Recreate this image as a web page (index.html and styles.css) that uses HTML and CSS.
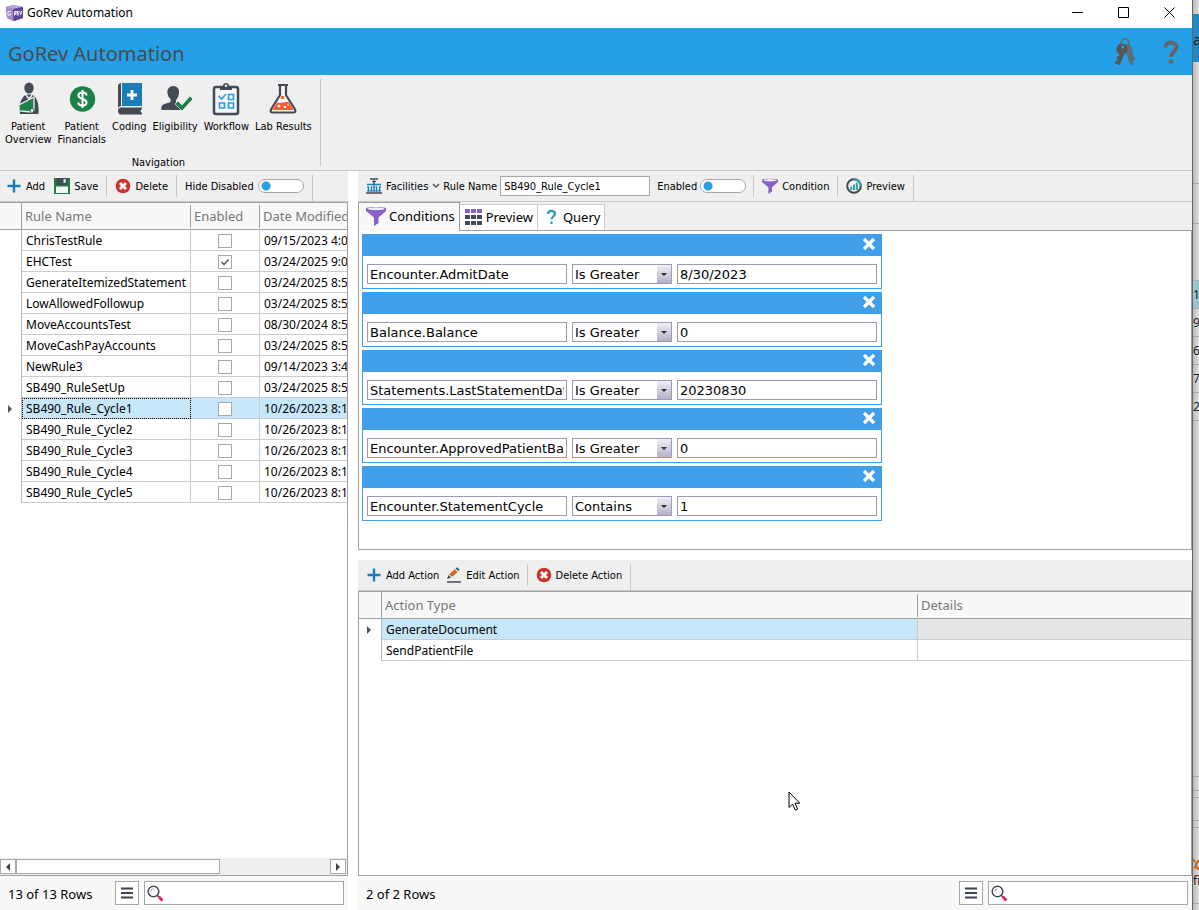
FILE: index.html
```html
<!DOCTYPE html>
<html lang="en">
<head>
    <meta charset="UTF-8">
    <meta name="viewport" content="width=device-width, initial-scale=1.0">
    <title>GoRev Automation</title>
    <link rel="stylesheet" href="styles.css">
</head>
<body>

    <!-- Shared icons -->
    <svg class="sprite" aria-hidden="true">
        <symbol id="plus" viewBox="0 0 16 16"><path d="M8 1.5v13M1.5 8h13" stroke="#1a7db8" stroke-width="2.4" fill="none"/></symbol>
        <symbol id="delete" viewBox="0 0 16 16"><circle cx="8" cy="8" r="7.3" fill="#d0302b"/><path d="M5 5l6 6M11 5l-6 6" stroke="#fff" stroke-width="2.8"/></symbol>
        <symbol id="funnel" viewBox="0 0 20 20"><path d="M0 2.500C0 .5 20 .5 20 2.500V5l-7.500 6.500V17L8 20v-8.500L0 5z" fill="#8a5fc8"/><ellipse cx="10" cy="2.800" rx="8.500" ry="1.500" fill="#f2ecfa"/></symbol>
        <symbol id="menu" viewBox="0 0 12 12"><path d="M0 1.500h12M0 6h12M0 10.500h12" stroke="#3c434f" stroke-width="2"/></symbol>
        <symbol id="search" viewBox="0 0 17 17"><circle cx="6.500" cy="6.500" r="5.300" fill="#fff" stroke="#444b57" stroke-width="1.500"/><path d="M3.800 6.500a2.800 2.800 0 0 1 2.700-2.700" fill="none" stroke="#8d939c"/><path d="M10.500 10.500l1.500 1.500" stroke="#444b57" stroke-width="1.500"/><path d="M11.800 11.800l3.700 3.700" stroke="#d82b63" stroke-width="3"/></symbol>
        <symbol id="close" viewBox="0 0 14 14"><path d="M2 2l10 10M12 2L2 12" stroke="#fff" stroke-width="3.400"/></symbol>
    </svg>

    <div class="app">
        <header class="titlebar">
            <svg class="logo" viewBox="0 0 17 16"><path d="M0 2L7 0l10 2v11l-9 3-7-3z" fill="#7b5fae"/><path d="M0 2l7 2v12l-6-3z" fill="#a58cc9"/><path d="M0 2L7 0l10 2-10 2z" fill="#b9a6d9"/><path d="M7 4l10-2v11l-9 3z" fill="#5d458f"/><path d="M8.500 10.500V6.500h2V8h-2l2 2.300M13 6.500h-1.500v3.500H13M11.500 8.300H13M13.800 6.300l.9 3.500 1-3.800M4.500 6.500H2v3.500h2.500V8.500" fill="none" stroke="#f4f0fb"/></svg>
            <span>GoRev Automation</span>
            <div class="window-buttons">
                <button aria-label="Minimize"><svg viewBox="0 0 11 11"><path d="M0 5.500h11" stroke="#000"/></svg></button>
                <button aria-label="Maximize"><svg viewBox="0 0 11 11"><path d="M.5.5h10v10H.5z" fill="none" stroke="#000"/></svg></button>
                <button aria-label="Close"><svg viewBox="0 0 11 11"><path d="M.5.5l10 10M10.500.5l-10 10" stroke="#000"/></svg></button>
            </div>
        </header>

        <div class="banner">
            <h1>GoRev Automation</h1>
            <button aria-label="Keys"><svg width="22" height="28" viewBox="0 0 22 28"><circle cx="11" cy="5" r="4" fill="none" stroke="#6a6a6a" stroke-width="1.500"/><path d="M12 6c5 0 7.500 4 6 8l3.500 8-2.500 1 1 3-3.500 1-4.500-12-1-6z" fill="#5d6d7b"/><path d="M8.500 5.500a5.800 5.800 0 0 1 1.500 11L6 27l-5-1.500 1-3 1.500.3.500-1.800-1.500-.7.800-2.300 1.600.2.300-2A5.800 5.800 0 0 1 8.500 5.500z" fill="#555"/><circle cx="8.800" cy="9" r="1.600" fill="#24a0e8"/></svg></button>
            <button aria-label="Help"><svg width="16" height="24" viewBox="0 0 16 24"><path d="M2.500 7.500c0-3.500 2.500-5 5.500-5s5.500 2 5.500 5c0 4-5.500 4.500-5.500 9.500" fill="none" stroke="#666" stroke-width="4"/><path d="M5.800 19.500h4.400v4H5.800z" fill="#666"/></svg></button>
        </div>

        <nav class="ribbon">
            <div class="ribbon-group">
                <div class="ribbon-items">
                    <button>
                        <svg viewBox="0 0 34 34"><ellipse cx="18" cy="6" rx="4.700" ry="5.500" fill="#434a54"/><path d="M9 32c-1-7 0-14 4-18 3-2 8-2 10 0 4 3 5 10 4.500 18z" fill="#434a54"/><path d="M15 13l3 4 3-4" fill="none" stroke="#efefef" stroke-width="1.500"/><path d="M23 15L8 23v6l13 1 2-2v-4z" fill="#1c8048" stroke="#efefef" stroke-width="1.300"/><circle cx="21" cy="28.500" r="2" fill="#efefef" stroke="#1c8048"/></svg>
                        Patient<br>Overview
                    </button>
                    <button>
                        <svg viewBox="0 0 34 34"><circle cx="17.500" cy="17" r="12.700" fill="#1c8048"/><path d="M21.500 13.500c0-2-1.500-3-4-3s-4 1.200-4 3c0 4.500 8 2.500 8 7 0 2-1.500 3-4 3s-4.200-1.200-4.200-3M17.500 8v18" fill="none" stroke="#fff" stroke-width="2"/></svg>
                        Patient<br>Financials
                    </button>
                    <button>
                        <svg viewBox="0 0 34 34"><path d="M6 4q0-2.500 3-3v23q-2 0-3 2z" fill="#434a54"/><path d="M10 1h20v23H10z" fill="#1a7db8"/><path d="M20 8v10M15 13h10" stroke="#fff" stroke-width="2.800"/><path d="M9 25.500h21v1.500c-2 1-2 3 0 4v1.500H9c-4 0-4-7 0-7z" fill="#434a54"/></svg>
                        Coding
                    </button>
                    <button>
                        <svg viewBox="0 0 34 34"><path d="M9.500 11c-.5-4 2-7 5.800-7s6.300 3 5.700 7c-.2 3-1.500 5.500-3 7v3l5 2v5H3.500c-.5-3 0-5 3-6l6-2v-3c-1.700-1.500-2.800-3.500-3-6z" fill="#434a54"/><path d="M17 22l3-3 4 4 8-9 3 3-11 12z" fill="#1c8048" stroke="#efefef" stroke-width=".7"/></svg>
                        Eligibility
                    </button>
                    <button>
                        <svg viewBox="0 0 34 34"><rect x="5" y="5" width="24" height="27" rx="2" fill="#f7f7f7" stroke="#434a54" stroke-width="2.500"/><path d="M11 8V4h3a3 3 0 0 1 6 0h3v4z" fill="#434a54"/><circle cx="17" cy="3.800" r="1.200" fill="#f7f7f7"/><path d="M9.500 14l3 3 4.500-5M19.500 12.500h5v5h-5zM10.500 21h5v5h-5zM19.500 21h5v5h-5z" fill="none" stroke="#24a0e8" stroke-width="1.700"/></svg>
                        Workflow
                    </button>
                    <button>
                        <svg viewBox="0 0 34 34"><path d="M12 3h10M14 3v10L5 27.500c-1 2 0 3 1.500 3h21c1.500 0 2.500-1 1.500-3L20 13V3" fill="#f7f7f7" stroke="#434a54" stroke-width="2.200"/><path d="M11 20.500c4 1.500 8-1.500 12 0L27.500 28h-21z" fill="#fa5a2a"/><circle cx="16.500" cy="15.500" r="1.800" fill="#fa5a2a"/><circle cx="13" cy="24" r="1.500" fill="#fff"/><circle cx="19" cy="25" r="1.300" fill="#fff"/><circle cx="22" cy="23" r=".8" fill="#fff"/></svg>
                        Lab Results
                    </button>
                </div>
                <div class="ribbon-caption">Navigation</div>
            </div>
        </nav>

        <div class="workspace">
            <!-- Rules -->
            <section class="rules">
                <div class="toolbar">
                    <div class="group">
                        <button><svg class="icon"><use href="#plus"/></svg>Add</button>
                        <button><svg class="icon" viewBox="0 0 16 16"><path d="M0 0h16v16H0z" fill="#1c8048"/><path d="M2.500 0h11v7h-11z" fill="#434a54"/><path d="M9.500 1.200h2.200v3.600H9.500z" fill="#efefef"/><path d="M2 8.500h12V15H2z" fill="#f5f5f5"/></svg>Save</button>
                    </div>
                    <div class="group"><button><svg class="icon"><use href="#delete"/></svg>Delete</button></div>
                    <div class="group switch"><label for="hide-disabled">Hide Disabled</label><input class="toggle" type="checkbox" id="hide-disabled"></div>
                </div>
                <div class="grid-panel">
                    <table class="grid rules-grid">
                        <thead>
                            <tr><th class="marker"></th><th class="name">Rule Name</th><th class="enabled">Enabled</th><th>Date Modified</th></tr>
                        </thead>
                        <tbody>
                            <tr><td></td><td>ChrisTestRule</td><td><input type="checkbox" aria-label="Enable ChrisTestRule"></td><td>09/15/2023 4:07 PM</td></tr>
                            <tr><td></td><td>EHCTest</td><td><input type="checkbox" aria-label="Enable EHCTest" checked></td><td>03/24/2025 9:00 AM</td></tr>
                            <tr><td></td><td>GenerateItemizedStatement</td><td><input type="checkbox" aria-label="Enable GenerateItemizedStatement"></td><td>03/24/2025 8:59 AM</td></tr>
                            <tr><td></td><td>LowAllowedFollowup</td><td><input type="checkbox" aria-label="Enable LowAllowedFollowup"></td><td>03/24/2025 8:59 AM</td></tr>
                            <tr><td></td><td>MoveAccountsTest</td><td><input type="checkbox" aria-label="Enable MoveAccountsTest"></td><td>08/30/2024 8:59 AM</td></tr>
                            <tr><td></td><td>MoveCashPayAccounts</td><td><input type="checkbox" aria-label="Enable MoveCashPayAccounts"></td><td>03/24/2025 8:59 AM</td></tr>
                            <tr><td></td><td>NewRule3</td><td><input type="checkbox" aria-label="Enable NewRule3"></td><td>09/14/2023 3:44 PM</td></tr>
                            <tr><td></td><td>SB490_RuleSetUp</td><td><input type="checkbox" aria-label="Enable SB490_RuleSetUp"></td><td>03/24/2025 8:59 AM</td></tr>
                            <tr class="selected"><td></td><td class="focused">SB490_Rule_Cycle1</td><td><input type="checkbox" aria-label="Enable SB490_Rule_Cycle1"></td><td>10/26/2023 8:10 AM</td></tr>
                            <tr><td></td><td>SB490_Rule_Cycle2</td><td><input type="checkbox" aria-label="Enable SB490_Rule_Cycle2"></td><td>10/26/2023 8:10 AM</td></tr>
                            <tr><td></td><td>SB490_Rule_Cycle3</td><td><input type="checkbox" aria-label="Enable SB490_Rule_Cycle3"></td><td>10/26/2023 8:10 AM</td></tr>
                            <tr><td></td><td>SB490_Rule_Cycle4</td><td><input type="checkbox" aria-label="Enable SB490_Rule_Cycle4"></td><td>10/26/2023 8:10 AM</td></tr>
                            <tr><td></td><td>SB490_Rule_Cycle5</td><td><input type="checkbox" aria-label="Enable SB490_Rule_Cycle5"></td><td>10/26/2023 8:10 AM</td></tr>
                        </tbody>
                    </table>
                    <div class="scrollbar">
                        <button class="left" aria-label="Scroll left"></button>
                        <div class="track"><div class="thumb"></div></div>
                        <button class="right" aria-label="Scroll right"></button>
                    </div>
                </div>
                <footer class="status">
                    <span>13 of 13 Rows</span>
                    <button aria-label="Menu"><svg><use href="#menu"/></svg></button>
                    <label class="search"><svg><use href="#search"/></svg><input type="text" aria-label="Search rules"></label>
                </footer>
            </section>

            <!-- Rule details -->
            <section class="details">
                <div class="toolbar">
                    <div class="group facilities">
                        <button><svg class="icon" viewBox="0 0 16 16"><path d="M4 1h8M0 15h16" stroke="#434a54" stroke-width="1.500"/><path d="M8 1v5M6 3.500h4" stroke="#434a54"/><path d="M1 6.500h14M2.500 8.500v5M5.500 8.500v5M8 4v9.500M10.500 8.500v5M13.500 8.500v5" stroke="#1a7db8" stroke-width="1.400"/><path d="M1 9h2M13 9h2M5 9h1.500M9.500 9H11M1 13h14" stroke="#1a7db8"/></svg>Facilities<svg class="chevron" viewBox="0 0 8 6"><path d="M1 1l3 3 3-3" fill="none" stroke="#555" stroke-width="1.500"/></svg></button>
                        <label for="rule-name">Rule Name</label>
                        <input class="rule-name" type="text" id="rule-name" value="SB490_Rule_Cycle1">
                        <label for="rule-enabled">Enabled</label>
                        <input class="toggle" type="checkbox" id="rule-enabled">
                    </div>
                    <div class="group"><button><svg class="icon"><use href="#funnel"/></svg>Condition</button></div>
                    <div class="group"><button><svg class="icon" viewBox="0 0 16 16"><circle cx="8" cy="8" r="6.800" fill="#f7f7f7" stroke="#434a54" stroke-width="2"/><path d="M8 1.200A6.800 6.800 0 0 1 14.800 8" fill="none" stroke="#2aa0a8" stroke-width="2"/><path d="M5.200 8.500V12M8 6.500V12M10.800 4.500V12" stroke="#2aa0a8" stroke-width="2"/></svg>Preview</button></div>
                </div>

                <div class="tabs" role="tablist">
                    <button class="active" role="tab" aria-selected="true"><svg width="20" height="20"><use href="#funnel"/></svg>Conditions</button>
                    <button role="tab"><svg width="17" height="16" viewBox="0 0 17 16"><path d="M0 0h5v4H0zM6 0h5v4H6zM12 0h5v4h-5z" fill="#8a5fc8"/><path d="M0 6h5v4H0zM6 6h5v4H6zM12 6h5v4h-5zM0 12h5v4H0zM6 12h5v4H6zM12 12h5v4h-5z" fill="#434a54"/></svg>Preview</button>
                    <button role="tab"><svg width="16" height="16" viewBox="0 0 16 16"><path d="M5 5C5 1 12 1 12 4.500c0 3-3.500 3-3.500 6M8.500 12.500V15" fill="none" stroke="#2aa0b0" stroke-width="2.300"/></svg>Query</button>
                </div>

                <div class="conditions">
                    <div class="condition">
                        <div class="condition-head"><button aria-label="Remove condition"><svg><use href="#close"/></svg></button></div>
                        <div class="condition-body">
                            <input type="text" aria-label="Field" value="Encounter.AdmitDate">
                            <select aria-label="Operator"><option>Is Greater</option></select>
                            <input type="text" aria-label="Value" value="8/30/2023">
                        </div>
                    </div>
                    <div class="condition">
                        <div class="condition-head"><button aria-label="Remove condition"><svg><use href="#close"/></svg></button></div>
                        <div class="condition-body">
                            <input type="text" aria-label="Field" value="Balance.Balance">
                            <select aria-label="Operator"><option>Is Greater</option></select>
                            <input type="text" aria-label="Value" value="0">
                        </div>
                    </div>
                    <div class="condition">
                        <div class="condition-head"><button aria-label="Remove condition"><svg><use href="#close"/></svg></button></div>
                        <div class="condition-body">
                            <input type="text" aria-label="Field" value="Statements.LastStatementDate">
                            <select aria-label="Operator"><option>Is Greater</option></select>
                            <input type="text" aria-label="Value" value="20230830">
                        </div>
                    </div>
                    <div class="condition">
                        <div class="condition-head"><button aria-label="Remove condition"><svg><use href="#close"/></svg></button></div>
                        <div class="condition-body">
                            <input type="text" aria-label="Field" value="Encounter.ApprovedPatientBalance">
                            <select aria-label="Operator"><option>Is Greater</option></select>
                            <input type="text" aria-label="Value" value="0">
                        </div>
                    </div>
                    <div class="condition">
                        <div class="condition-head"><button aria-label="Remove condition"><svg><use href="#close"/></svg></button></div>
                        <div class="condition-body">
                            <input type="text" aria-label="Field" value="Encounter.StatementCycle">
                            <select aria-label="Operator"><option>Contains</option></select>
                            <input type="text" aria-label="Value" value="1">
                        </div>
                    </div>
                </div>

                <div class="toolbar">
                    <div class="group">
                        <button><svg class="icon"><use href="#plus"/></svg>Add Action</button>
                        <button><svg class="icon" viewBox="0 0 16 16"><path d="M1 15h14" stroke="#434a54" stroke-width="1.500"/><path d="M1 12l1.500-4L5 10.500z" fill="#434a54"/><path d="M3.200 7.200l5.500-5 2.800 2.800-5.500 5z" fill="#d2691e"/><path d="M9.500 1.500L11 .3l2.500 2.500L12.300 4z" fill="#434a54"/></svg>Edit Action</button>
                    </div>
                    <div class="group"><button><svg class="icon"><use href="#delete"/></svg>Delete Action</button></div>
                </div>
                <div class="grid-panel">
                    <table class="grid actions-grid">
                        <thead>
                            <tr><th class="marker"></th><th>Action Type</th><th class="detail">Details</th></tr>
                        </thead>
                        <tbody>
                            <tr class="selected"><td></td><td>GenerateDocument</td><td class="empty"></td></tr>
                            <tr><td></td><td>SendPatientFile</td><td></td></tr>
                        </tbody>
                    </table>
                </div>
                <footer class="status">
                    <span>2 of 2 Rows</span>
                    <button aria-label="Menu"><svg><use href="#menu"/></svg></button>
                    <label class="search"><svg><use href="#search"/></svg><input type="text" aria-label="Search actions"></label>
                </footer>
            </section>
        </div>
    </div>

    <!-- Edge of the window behind -->
    <aside class="behind" aria-hidden="true">
        <div class="behind-title"></div>
        <div class="behind-banner">an</div>
        <div class="behind-ribbon"></div>
        <div class="behind-tools"></div>
        <div class="behind-head"></div>
        <div class="behind-row active">1</div>
        <div class="behind-row">9</div>
        <div class="behind-row">6</div>
        <div class="behind-row">7</div>
        <div class="behind-row">2</div>
        <div class="behind-body"></div>
        <div class="behind-bar"></div>
        <div class="behind-gap"></div>
        <div class="behind-status"></div>
        <div class="behind-gap"></div>
        <div class="behind-foot"><svg width="8" height="14" viewBox="0 0 8 14"><circle cx="7" cy="7" r="4" fill="none" stroke="#c8691e" stroke-width="2.500"/><path d="M0 1l2 3M1 10l2-1" stroke="#c8691e" stroke-width="2"/></svg>fi</div>
    </aside>

    <svg class="cursor" viewBox="0 0 13 20" aria-hidden="true"><path d="M1 1v15.500l3.600-3.400 2.600 6 2.400-1-2.600-5.900h4.800z" fill="#fff" stroke="#000"/></svg>

</body>
</html>
```
FILE: styles.css
```css
* {
    box-sizing: border-box;
}
body {
    margin: 0;
    height: 100vh;
    display: flex;
    overflow: hidden;
    background: #e0e0e0;
    font-family: "Noto Sans", "Open Sans", sans-serif;
    font-size: 12px;
    color: #000;
}
button {
    margin: 0;
    padding: 0;
    border: 0;
    background: none;
    font: inherit;
    color: inherit;
}
input, select {
    margin: 0;
    font: inherit;
    color: inherit;
    border-radius: 0;
}
svg {
    display: block;
    flex: none;
}
.sprite {
    position: absolute;
    width: 0;
    height: 0;
}
.app {
    flex: 1;
    min-width: 0;
    display: flex;
    flex-direction: column;
    background: #fff;
    border-right: 1px solid #666;
}

/* Title bar and banner */
.titlebar {
    height: 28px;
    display: flex;
    align-items: center;
    padding: 0 0 3px 6px;
    gap: 4px;
}
.logo {
    width: 17px;
    height: 16px;
}
.window-buttons {
    margin-left: auto;
    display: flex;
}
.window-buttons button {
    width: 46px;
    height: 25px;
    display: flex;
    align-items: center;
    justify-content: center;
}
.window-buttons svg {
    width: 11px;
    height: 11px;
}
.banner {
    height: 47px;
    display: flex;
    align-items: center;
    gap: 27px;
    padding: 0 13px 0 8px;
    background: #24a0e8;
}
.banner h1 {
    margin: 0 auto 0 0;
    padding-top: 4px;
    font-size: 20px;
    font-weight: normal;
    color: #4a4a4a;
}

/* Ribbon */
.ribbon {
    display: flex;
    height: 96px;
    padding: 4px 0;
    background: #efefef;
    border-bottom: 1px solid #c8c8c8;
}
.ribbon-group {
    display: flex;
    flex-direction: column;
    justify-content: space-between;
    padding: 0 8px 0 5px;
    border-right: 1px solid #c8c8c8;
}
.ribbon-items {
    display: flex;
    gap: 6px;
    align-items: flex-start;
}
.ribbon-items button, .ribbon-caption, .toolbar {
    font-family: "DejaVu Sans Condensed", "Open Sans", sans-serif;
    font-size: 11px;
    line-height: 13px;
}
.ribbon-items button {
    white-space: nowrap;
}
.ribbon-items svg {
    width: 34px;
    height: 34px;
    margin: 3px auto 4px;
}
.ribbon-caption {
    text-align: center;
    margin-bottom: -3px;
}

/* Workspace */
.workspace {
    flex: 1;
    min-height: 0;
    display: flex;
    gap: 10px;
}
.rules {
    width: 348px;
    display: flex;
    flex-direction: column;
}
.details {
    flex: 1;
    min-width: 0;
    display: flex;
    flex-direction: column;
}
.toolbar {
    flex: none;
    height: 31px;
    display: flex;
    background: #efefef;
    border-bottom: 1px solid #c8c8c8;
}
.group {
    display: flex;
    align-items: center;
    gap: 8px;
    padding: 0 8px;
    margin: 4px 0;
    border-right: 1px solid #c8c8c8;
}
.rules .group:first-child {
    padding-left: 6px;
    gap: 9px;
}
.details .group:first-child {
    gap: 7px;
    padding-right: 7px;
}
.group:last-child {
    margin-bottom: 0;
    padding-bottom: 4px;
}
.group.switch {
    gap: 4px;
}
.group button {
    display: flex;
    align-items: center;
    gap: 4px;
    white-space: nowrap;
}
.icon {
    width: 16px;
    height: 16px;
}
.chevron {
    width: 8px;
    height: 6px;
}
.toggle {
    appearance: none;
    width: 46px;
    height: 14px;
    border: 1px solid #a8a8a8;
    border-radius: 7px;
    background: radial-gradient(circle at 7px 6px, #24a0e8 4px, #fff 5px);
}
.toggle:checked {
    background: radial-gradient(circle at 37px 6px, #24a0e8 4px, #fff 5px);
}
.rule-name {
    width: 150px;
    height: 20px;
    margin-right: 4px;
    padding: 0 3px;
    border: 1px solid #a8a8a8;
}
.details .facilities:first-child {
    gap: 3px;
}

/* Data grids */
.grid-panel {
    flex: 1;
    min-height: 0;
    overflow: hidden;
    display: flex;
    flex-direction: column;
    border: 1px solid #a0a0a0;
}
.rules .grid-panel {
    border-left: 0;
}
.grid {
    table-layout: fixed;
    border-collapse: separate;
    border-spacing: 0;
}
.rules-grid {
    width: 400px;
}
.actions-grid {
    width: 100%;
}
.grid th {
    height: 27px;
    padding: 0 3px;
    text-align: left;
    font-size: 13px;
    font-weight: normal;
    color: #777;
    background: linear-gradient(#a0a0a0, #a0a0a0) right center / 1px 23px no-repeat #f8f8f8;
    border-bottom: 1px solid #a0a0a0;
    white-space: nowrap;
}
.grid .marker {
    width: 22px;
    background-size: 1px 100%;
}
.actions-grid .marker {
    width: 23px;
}
.name {
    width: 169px;
}
.enabled {
    width: 69px;
}
.detail {
    width: 273px;
}
.grid .detail {
    background-image: none;
}
.grid td {
    height: 21px;
    padding: 2px 4px 0;
    line-height: 18px;
    border-right: 1px solid #ccc;
    border-bottom: 1px solid #ccc;
    white-space: nowrap;
}
.grid td:first-child {
    padding: 0 0 0 8px;
    border-bottom: 0;
    border-right-color: #b8b8b8;
}
.actions-grid td:last-child {
    border-right: 0;
}
.selected td:not(:first-child) {
    background: #c6e7fa;
}
.selected td:first-child::before {
    content: "";
    display: block;
    width: 0;
    border: 4px solid transparent;
    border-left-color: #555;
    border-right-width: 0;
}
.selected .focused {
    outline: 1px dotted #000;
    outline-offset: -1px;
}
.selected .empty {
    background: #e5e5e5 !important;
}
.grid input {
    appearance: none;
    display: block;
    width: 14px;
    height: 14px;
    margin: 0 auto 1px;
    border: 1px solid #a8a8a8;
    background: #fff;
}
.grid input:checked {
    background: url('data:image/svg+xml,<svg xmlns="http://www.w3.org/2000/svg" viewBox="0 0 12 12"><path d="M2.500 6l2.500 2.500 4.500-5" fill="none" stroke="%23555" stroke-width="1.500"/></svg>') center / 12px 12px no-repeat #fff;
}
.scrollbar {
    height: 17px;
    margin-top: auto;
    padding: 1px 1px 1px 0;
    display: flex;
    background: #efefef;
}
.scrollbar button, .thumb {
    border: 1px solid #a8a8a8;
    background: #fff;
}
.scrollbar button {
    width: 16px;
    display: flex;
    align-items: center;
    justify-content: center;
}
.scrollbar button::before {
    content: "";
    border: 4px solid transparent;
}
.left::before {
    border-left-width: 0 !important;
    border-right-color: #444 !important;
}
.right::before {
    border-right-width: 0 !important;
    border-left-color: #444 !important;
}
.track {
    flex: 1;
}
.thumb {
    width: 65%;
    height: 100%;
}

/* Status bars */
.status {
    flex: none;
    height: 34px;
    display: flex;
    align-items: center;
    gap: 5px;
    padding: 0 4px 0 8px;
    background: #f8f8f8;
}
.status span {
    margin-right: auto;
    padding-top: 2px;
    font-size: 13px;
}
.status button, .search {
    height: 24px;
    border: 1px solid #a8a8a8;
    background: #fff;
    display: flex;
    align-items: center;
}
.status button {
    width: 24px;
    justify-content: center;
}
.status button svg {
    width: 12px;
    height: 12px;
}
.search {
    width: 200px;
    padding-left: 2px;
}
.search svg {
    width: 17px;
    height: 17px;
}
.search input {
    flex: 1;
    min-width: 0;
    border: 0;
    background: none;
}

/* Tabs */
.tabs {
    display: flex;
    align-items: flex-end;
    height: 29px;
    background: #efefef;
    border-bottom: 1px solid #a0a0a0;
}
.tabs button {
    height: 26px;
    display: flex;
    align-items: center;
    gap: 4px;
    padding: 0 4px 1px 5px;
    background: #fff;
    border: 1px solid #ccc;
    border-left: 0;
    border-bottom: 0;
    font-size: 13px;
}
.tabs .active {
    height: 29px;
    margin-bottom: -1px;
    padding: 0 4px 2px 7px;
    gap: 3px;
    background: #f8f8f8;
    border: 1px solid #a0a0a0;
    border-bottom: 0;
}

/* Conditions */
.conditions {
    flex: none;
    height: 319px;
    margin-bottom: 10px;
    padding: 3px;
    display: flex;
    flex-direction: column;
    gap: 3px;
    border: 1px solid #a0a0a0;
    border-top: 0;
}
.condition {
    width: 520px;
    border: 1px solid #409fe8;
}
.condition-head {
    height: 21px;
    display: flex;
    justify-content: flex-end;
    align-items: center;
    padding: 0 5px 3px 0;
    background: #409fe8;
}
.condition-head svg {
    width: 14px;
    height: 14px;
}
.condition-body {
    display: flex;
    gap: 5px;
    padding: 8px 4px 4px;
}
.condition input, .condition select {
    width: 200px;
    height: 20px;
    padding: 0 2px;
    border: 1px solid #9c98b8;
    background: #fff;
    font-family: "DejaVu Sans", Verdana, sans-serif;
    font-size: 13px;
}
.condition select {
    appearance: none;
    width: 100px;
    background:
        url('data:image/svg+xml,<svg xmlns="http://www.w3.org/2000/svg" viewBox="0 0 6 3"><path d="M0 0h6L3 3z" fill="%23333"/></svg>') right 4px center / 6px 3px no-repeat,
        linear-gradient(#f0f0f5, #b4b1c8) right / 14px 100% no-repeat,
        #fff;
}

/* Window behind */
.behind {
    width: 6px;
    display: flex;
    flex-direction: column;
    overflow: hidden;
    background: linear-gradient(90deg, #bbb, #e0e0e0);
    color: #222;
}
.behind div {
    flex: none;
    border-bottom: 1px solid #aaa;
}
.behind .behind-title {
    height: 14px;
    border: 0;
}
.behind .behind-banner {
    height: 48px;
    border: 0;
    background: #2088c4;
    font-size: 15px;
    line-height: 50px;
}
.behind-ribbon {
    height: 122px;
}
.behind-tools {
    height: 40px;
}
.behind-head {
    height: 57px;
}
.behind-row {
    height: 28px;
    line-height: 28px;
}
.behind-row.active {
    background: #98c4d2;
}
.behind-body {
    height: 356px;
}
.behind-bar {
    height: 14px;
}
.behind-gap {
    height: 7px;
}
.behind-status {
    height: 23px;
}
.behind-foot {
    height: 76px;
    padding-top: 30px;
}
.cursor {
    position: absolute;
    left: 788px;
    top: 791px;
    width: 13px;
    height: 20px;
}
```
